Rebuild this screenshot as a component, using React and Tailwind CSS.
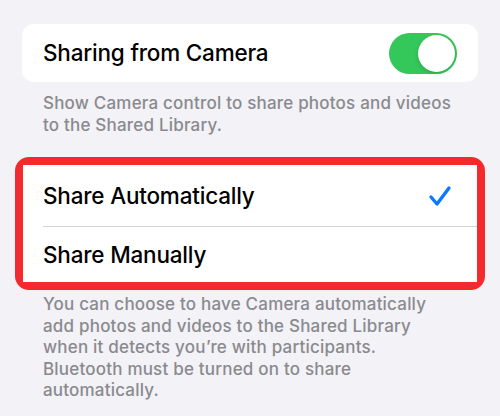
import React, { useState } from "react";

const font = { fontFamily: "Inter, 'Noto Sans', sans-serif" };

const Toggle = ({ on, onChange }) => (
  <button
    onClick={() => onChange(!on)}
    className={`relative h-[41px] w-[68px] rounded-full transition-colors ${
      on ? "bg-[#34c759]" : "bg-[#e9e9ea]"
    }`}
  >
    <span
      className={`absolute top-[2px] h-[37px] w-[37px] rounded-full bg-white shadow-[0_2px_4px_rgba(0,0,0,0.15)] transition-all ${
        on ? "left-[29px]" : "left-[2px]"
      }`}
    />
  </button>
);

const Check = () => (
  <svg width="24" height="22" viewBox="0 0 24 22" fill="none">
    <path
      d="M3 12 L9 19 L21 3"
      stroke="#0a7aff"
      strokeWidth="3.4"
      strokeLinecap="round"
      strokeLinejoin="round"
    />
  </svg>
);

export default function App() {
  const [sharing, setSharing] = useState(true);
  const [mode, setMode] = useState("auto");

  return (
    <div
      className="h-[416px] w-[500px] overflow-hidden bg-[#f2f2f7] px-[22px] pt-[24px]"
      style={font}
    >
      {/* Sharing from Camera */}
      <div className="flex h-[58px] items-center justify-between rounded-[12px] bg-white pl-[21px] pr-[21px]">
        <span className="text-[22.5px] font-medium tracking-[-0.2px] text-black">
          Sharing from Camera
        </span>
        <Toggle on={sharing} onChange={setSharing} />
      </div>
      <p className="mt-[10px] pl-[21px] pr-[20px] text-[17px] leading-[22px] font-medium tracking-[0.2px] text-[#8a8a8e]">
        Show Camera control to share photos and videos to the Shared Library.
      </p>

      {/* Share mode */}
      <div className="-mx-[7px] mt-[21px] rounded-[14px] border-[8px] border-[#f52a2c]">
        <div className="bg-white">
          <button
            onClick={() => setMode("auto")}
            className="flex h-[61px] w-full items-center justify-between pl-[20px] pr-[25px]"
          >
            <span className="text-[22.5px] font-medium tracking-[-0.2px] text-black">
              Share Automatically
            </span>
            {mode === "auto" && <Check />}
          </button>
          <div className="ml-[20px] h-px bg-[#d1d1d6]" />
          <button
            onClick={() => setMode("manual")}
            className="flex h-[55px] w-full items-center justify-between pl-[20px] pr-[25px]"
          >
            <span className="text-[22.5px] font-medium tracking-[-0.2px] text-black">
              Share Manually
            </span>
            {mode === "manual" && <Check />}
          </button>
        </div>
      </div>
      <p className="mt-[4px] pl-[21px] pr-[38px] text-[17px] leading-[21.5px] font-medium tracking-[0.2px] text-[#8a8a8e]">
        You can choose to have Camera automatically add photos and videos to the
        Shared Library when it detects you’re with participants. Bluetooth must
        be turned on to share automatically.
      </p>
    </div>
  );
}
